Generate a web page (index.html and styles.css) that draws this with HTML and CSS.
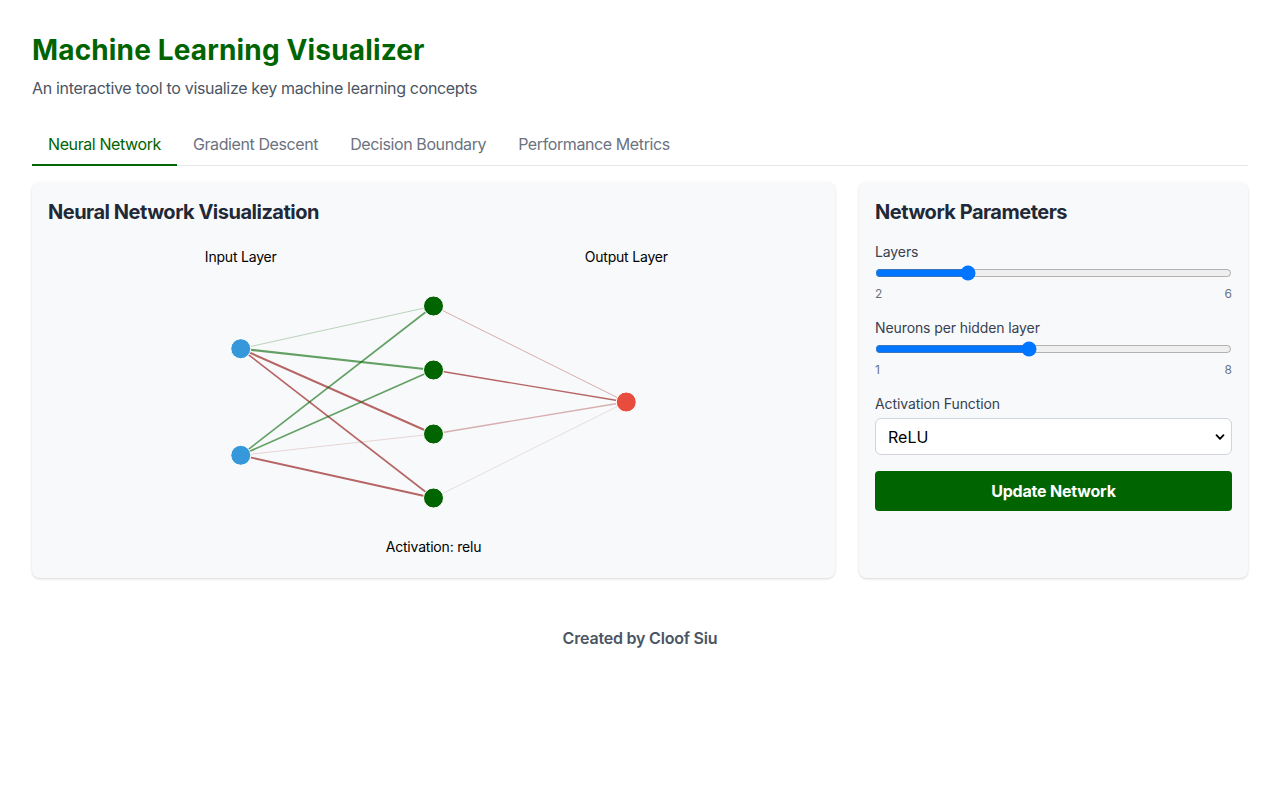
FILE: index.html
```html
<!DOCTYPE html>
<html lang="en">
<head>
<meta charset="utf-8">
<title>Machine Learning Visualizer</title>
<link rel="stylesheet" href="styles.css">
</head>
<body>
<div class="page">
  <header class="header">
    <h1 class="title">Machine Learning Visualizer</h1>
    <p class="subtitle">An interactive tool to visualize key machine learning concepts</p>
  </header>

  <nav class="tabs">
    <button class="tab active">Neural Network</button>
    <button class="tab">Gradient Descent</button>
    <button class="tab">Decision Boundary</button>
    <button class="tab">Performance Metrics</button>
  </nav>

  <main class="grid">
    <section class="card">
      <h2 class="card-title">Neural Network Visualization</h2>
      <svg class="net" viewBox="0 0 771 320" width="771" height="320">
        <text x="192.75" y="20" class="lbl" text-anchor="middle">Input Layer</text>
        <text x="578.25" y="20" class="lbl" text-anchor="middle">Output Layer</text>

        <!-- input 1 -> hidden -->
        <line x1="192.75" y1="106.7" x2="385.5" y2="64" stroke="rgb(0,100,0)" stroke-opacity="0.25" stroke-width="1"/>
        <line x1="192.75" y1="106.7" x2="385.5" y2="128" stroke="rgb(0,100,0)" stroke-opacity="0.6" stroke-width="2.2"/>
        <line x1="192.75" y1="106.7" x2="385.5" y2="192" stroke="rgb(139,0,0)" stroke-opacity="0.6" stroke-width="2"/>
        <line x1="192.75" y1="106.7" x2="385.5" y2="256" stroke="rgb(139,0,0)" stroke-opacity="0.6" stroke-width="1.6"/>
        <!-- input 2 -> hidden -->
        <line x1="192.75" y1="213.3" x2="385.5" y2="64" stroke="rgb(0,100,0)" stroke-opacity="0.6" stroke-width="1.7"/>
        <line x1="192.75" y1="213.3" x2="385.5" y2="128" stroke="rgb(0,100,0)" stroke-opacity="0.6" stroke-width="1.7"/>
        <line x1="192.75" y1="213.3" x2="385.5" y2="192" stroke="rgb(139,0,0)" stroke-opacity="0.15" stroke-width="1"/>
        <line x1="192.75" y1="213.3" x2="385.5" y2="256" stroke="rgb(139,0,0)" stroke-opacity="0.6" stroke-width="1.8"/>
        <!-- hidden -> output -->
        <line x1="385.5" y1="64" x2="578.25" y2="160" stroke="rgb(139,0,0)" stroke-opacity="0.3" stroke-width="1"/>
        <line x1="385.5" y1="128" x2="578.25" y2="160" stroke="rgb(139,0,0)" stroke-opacity="0.6" stroke-width="1.4"/>
        <line x1="385.5" y1="192" x2="578.25" y2="160" stroke="rgb(139,0,0)" stroke-opacity="0.3" stroke-width="1.4"/>
        <line x1="385.5" y1="256" x2="578.25" y2="160" stroke="rgb(139,0,0)" stroke-opacity="0.12" stroke-width="1"/>

        <circle cx="192.75" cy="106.7" r="10" fill="#3498db" stroke="#fff" stroke-width="1"/>
        <circle cx="192.75" cy="213.3" r="10" fill="#3498db" stroke="#fff" stroke-width="1"/>
        <circle cx="385.5" cy="64" r="10" fill="#006400" stroke="#fff" stroke-width="1"/>
        <circle cx="385.5" cy="128" r="10" fill="#006400" stroke="#fff" stroke-width="1"/>
        <circle cx="385.5" cy="192" r="10" fill="#006400" stroke="#fff" stroke-width="1"/>
        <circle cx="385.5" cy="256" r="10" fill="#006400" stroke="#fff" stroke-width="1"/>
        <circle cx="578.25" cy="160" r="10" fill="#e74c3c" stroke="#fff" stroke-width="1"/>

        <text x="385.5" y="310" class="lbl" text-anchor="middle">Activation: relu</text>
      </svg>
    </section>

    <section class="card">
      <h2 class="card-title">Network Parameters</h2>
      <div class="field">
        <label class="field-label">Layers</label>
        <input class="range" type="range" min="2" max="6" value="3">
        <div class="ticks"><span>2</span><span>6</span></div>
      </div>
      <div class="field">
        <label class="field-label">Neurons per hidden layer</label>
        <input class="range" type="range" min="1" max="8" value="4">
        <div class="ticks"><span>1</span><span>8</span></div>
      </div>
      <div class="field">
        <label class="field-label">Activation Function</label>
        <div class="select-wrap">
          <select class="select">
            <option>ReLU</option>
            <option>Sigmoid</option>
            <option>Tanh</option>
          </select>
          <svg class="chev" width="10" height="10" viewBox="0 0 10 10"><path d="M1.5 3.2 L5 6.8 L8.5 3.2" fill="none" stroke="#000" stroke-width="1.8" stroke-linecap="round" stroke-linejoin="round"/></svg>
        </div>
      </div>
      <button class="btn">Update Network</button>
    </section>
  </main>

  <footer class="footer">Created by Cloof Siu</footer>
</div>
</body>
</html>
```

FILE: styles.css
```css
* { box-sizing: border-box; }
html, body { margin: 0; padding: 0; background: #fff; }
body {
  font-family: Inter, "Noto Sans", "Liberation Sans", sans-serif;
  color: #1f2937;
}
.page { padding: 32px; }

.header { margin-bottom: 20px; }
.title {
  margin: 0;
  font-size: 28px;
  line-height: 36px;
  font-weight: 700;
  color: #006400;
  letter-spacing: 0.15px;
}
.subtitle {
  margin: 8px 0 0;
  font-size: 16px;
  line-height: 24px;
  color: #4b5563;
  letter-spacing: -0.33px;
}

.tabs {
  display: flex;
  border-bottom: 1px solid #e5e7eb;
  margin-bottom: 16px;
}
.tab {
  font-family: inherit;
  font-size: 16px;
  line-height: 24px;
  padding: 12px 16px 8px;
  margin-bottom: -1px;
  background: none;
  border: none;
  border-bottom: 2px solid transparent;
  color: #6b7280;
  letter-spacing: -0.4px;
  cursor: pointer;
}
.tab.active { color: #006400; border-bottom-color: #006400; }

.grid {
  display: grid;
  grid-template-columns: 803fr 389fr;
  gap: 24px;
}
.card {
  background: #f8f9fa;
  border-radius: 8px;
  box-shadow: 0 1px 3px rgba(0,0,0,0.12), 0 1px 2px rgba(0,0,0,0.04);
  padding: 16px;
}
.card-title {
  margin: 0 0 16px;
  font-size: 20px;
  line-height: 28px;
  font-weight: 700;
  color: #1f2937;
  letter-spacing: -0.5px;
}

.net { display: block; width: 100%; height: 320px; }
.lbl { font-size: 14px; fill: #000; font-family: Inter, "Noto Sans", sans-serif; letter-spacing: -0.2px; }

.field { margin-bottom: 16px; }
.field-label {
  display: block;
  font-size: 14px;
  line-height: 20px;
  color: #374151;
  letter-spacing: -0.1px;
}
.range {
  display: block;
  width: 100%;
  margin: 3px 0 2px;
  height: 16px;
  accent-color: #0075ff;
}
.ticks {
  display: flex;
  justify-content: space-between;
  font-size: 12px;
  line-height: 16px;
  color: #6b7280;
  margin-top: 5px;
}

.select-wrap { position: relative; margin-top: 4px; }
.select {
  display: block;
  width: 100%;
  height: 37px;
  appearance: none;
  -webkit-appearance: none;
  background: #fff;
  border: 1px solid #d1d5db;
  border-radius: 6px;
  padding: 0 12px;
  font-family: inherit;
  font-size: 16px;
  color: #000;
}
.chev { position: absolute; right: 7px; top: 14px; }

.btn {
  display: block;
  width: 100%;
  height: 40px;
  border: none;
  border-radius: 4px;
  background: #006400;
  color: #fff;
  font-family: inherit;
  font-size: 16px;
  font-weight: 700;
  letter-spacing: -0.2px;
  cursor: pointer;
}

.footer {
  margin-top: 48px;
  text-align: center;
  font-size: 16px;
  line-height: 24px;
  font-weight: 600;
  color: #4b5563;
  letter-spacing: -0.2px;
}
```
